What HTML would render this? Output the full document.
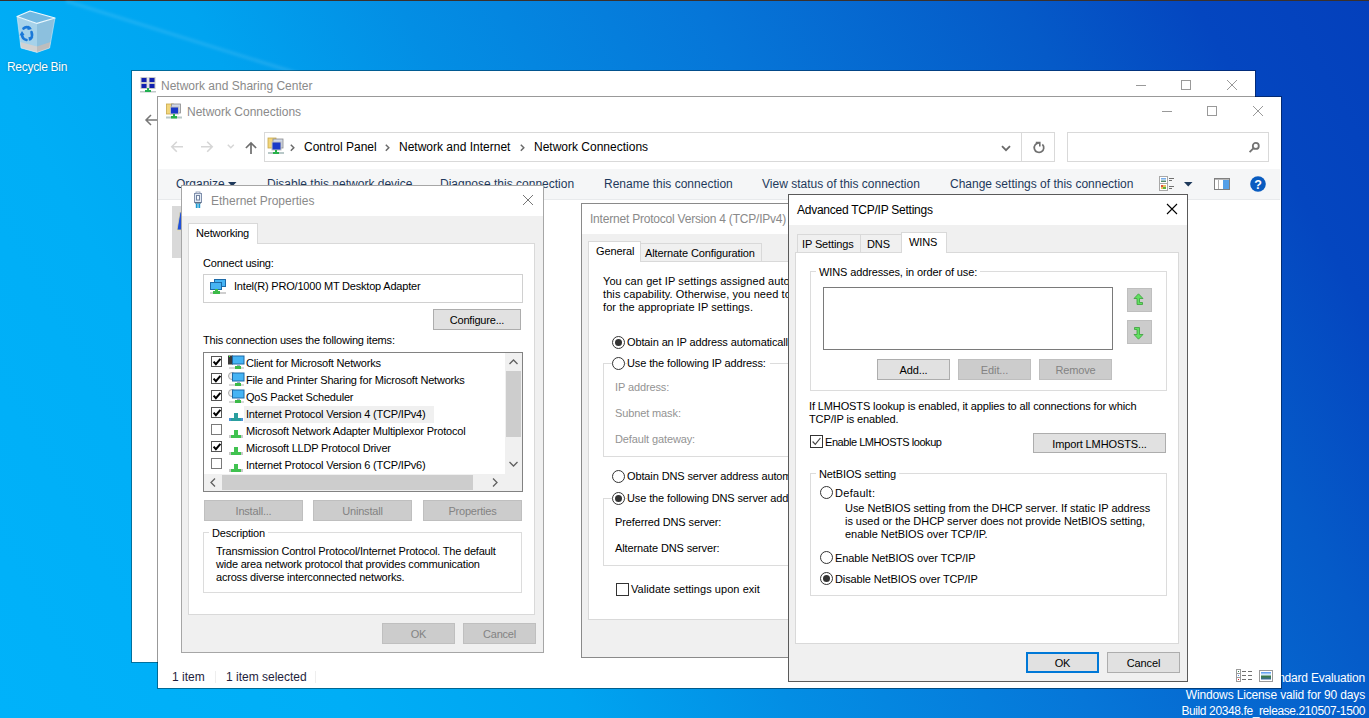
<!DOCTYPE html>
<html><head><meta charset="utf-8">
<style>
*{margin:0;padding:0;box-sizing:border-box}
html,body{width:1369px;height:718px;overflow:hidden}
body{position:relative;font-family:"Liberation Sans",sans-serif;font-size:11px;color:#000;
background:linear-gradient(61deg,#00b2fa 0%,#00aef6 20%,#00a4f0 33%,#038ee4 45%,#0676d8 62%,#055ac8 80%,#0446c0 90%,#0440bc 100%)}
.a{position:absolute}
.L{position:absolute;left:0;top:0;width:1369px;height:718px}
.t{position:absolute;white-space:nowrap;line-height:13px;font-size:11px}
.t12{position:absolute;white-space:nowrap;line-height:17px;font-size:12px}
.win{position:absolute;background:#fff}
.dlg{position:absolute;background:#f0f0f0}
.btn{position:absolute;background:#e1e1e1;border:1px solid #adadad;text-align:center;line-height:19px;font-size:11px;white-space:nowrap;padding-top:1px}
.btn.dis{background:#cccccc;border-color:#bfbfbf;color:#838383}
.grp{position:absolute;border:1px solid #dcdcdc}
.cb{position:absolute;width:13px;height:13px;border:1px solid #333;background:#fff}
.rd{position:absolute;width:13px;height:13px;border:1px solid #333;border-radius:50%;background:#fff}
.rd.on::after{content:"";position:absolute;left:2px;top:2px;width:7px;height:7px;border-radius:50%;background:#333}
.gray{color:#6d6d6d}
.es{letter-spacing:-0.2px}
.ts{letter-spacing:-0.12px}
.dis{color:#939393}
svg{position:absolute;overflow:visible}
</style></head><body>

<!-- DESKTOP -->
<div class="L" id="desk">
  <div class="a" style="left:0;top:0;width:1369px;height:1px;background:#3a302c"></div>
  <svg style="left:0;top:0" width="1369" height="718"><defs><filter id="bl" x="-20%" y="-50%" width="140%" height="200%"><feGaussianBlur stdDeviation="1.8"/></filter></defs>
    <path d="M66 1 L306 76" stroke="rgba(255,255,255,.12)" stroke-width="3" filter="url(#bl)"/>
  </svg>
  <!-- recycle bin -->
  <svg style="left:0;top:0" width="60" height="56" viewBox="0 0 60 56">
    <path d="M17 16.5 L37 23.4 L37 52.4 L21 48 Z" fill="#a6d2ea"/>
    <path d="M37 23.4 L55 18 L49.6 48 L37 52.4 Z" fill="#8cc0de"/>
    <path d="M17 16.5 L30 11 L55 18 L37 23.4 Z" fill="#72b9e2" stroke="#eef8fd" stroke-width="1.1" stroke-linejoin="round"/>
    <path d="M20.3 42 L37 46.5 L37 52.4 L21 48 Z" fill="#d2d2d2"/>
    <path d="M37 46.5 L50.6 42 L49.6 48 L37 52.4 Z" fill="#bdbdbd"/>
    <path d="M17 16.5 L21 48 L37 52.4 L49.6 48 L55 18" fill="none" stroke="#d8eef9" stroke-width="0.8" opacity=".7"/>
    <g fill="none" stroke="#1a78d8" stroke-width="2.6" stroke-linecap="round">
      <path d="M23.5 28.5 Q26 26 29.5 28"/>
      <path d="M31.5 32 Q33 36 30.5 39"/>
      <path d="M26.5 40 Q22 39 22 34"/>
    </g>
    <g fill="#1a78d8"><path d="M28 25.5 L32 29 L27.5 30 Z"/><path d="M33.5 37.5 L29 41 L28.5 37 Z"/><path d="M19.5 35.5 L22 31 L24.5 35 Z"/></g>
  </svg>
  <div class="t12" style="left:7px;top:59px;color:#fff;font-size:12px;letter-spacing:-0.3px;text-shadow:0 0 2px rgba(0,0,0,.35)">Recycle Bin</div>
  <!-- watermark -->
  <div class="t12" style="right:4px;top:670px;color:#fff;text-align:right;letter-spacing:-0.2px">Windows Server 2022 Standard Evaluation</div>
  <div class="t12" style="right:4px;top:687px;color:#fff;text-align:right;letter-spacing:-0.15px">Windows License valid for 90 days</div>
  <div class="t12" style="right:4px;top:703px;color:#fff;text-align:right;letter-spacing:-0.39px">Build 20348.fe_release.210507-1500</div>
</div>

<!-- NETWORK AND SHARING CENTER -->
<div class="L" id="nsc">
  <div class="win" style="left:131px;top:70px;width:1125px;height:593px;border:1px solid rgba(0,0,0,.36);background-clip:padding-box"></div>
  <div class="t12" style="left:161px;top:78px;color:#8a8a8a">Network and Sharing Center</div>
  <svg style="left:140px;top:77px" width="16" height="16">
    <rect x="1" y="0.5" width="6" height="5" fill="#1020b0" stroke="#c8c8c8"/><rect x="9" y="0.5" width="6" height="5" fill="#1020b0" stroke="#c8c8c8"/>
    <rect x="1" y="6.5" width="6" height="5" fill="#1020b0" stroke="#c8c8c8"/><rect x="9" y="6.5" width="6" height="5" fill="#1020b0" stroke="#c8c8c8"/>
    <rect x="7" y="11" width="2" height="3" fill="#20b050"/><rect x="0" y="14" width="16" height="1.5" fill="#c0c8c8"/><rect x="5" y="13" width="6" height="2" fill="#20b050"/>
  </svg>
  <!-- title controls -->
  <div class="a" style="left:1136px;top:85px;width:10px;height:1px;background:#999"></div>
  <div class="a" style="left:1181px;top:80px;width:10px;height:10px;border:1px solid #999"></div>
  <svg style="left:1227px;top:80px" width="10" height="10"><path d="M0 0L10 10M10 0L0 10" stroke="#999" stroke-width="1"/></svg>
  <!-- back arrow -->
  <svg style="left:145px;top:114px" width="12" height="12"><path d="M1 6H12M6 1L1 6L6 11" stroke="#777" stroke-width="1.5" fill="none"/></svg>
</div>

<!-- NETWORK CONNECTIONS -->
<div class="L" id="nc">
  <div class="win" style="left:157px;top:96px;width:1125px;height:593px;border:1px solid rgba(0,0,0,.4);background-clip:padding-box"></div>
  <div class="t12" style="left:187px;top:104px;color:#8a8a8a">Network Connections</div>
  <svg style="left:166px;top:103px" width="16" height="16">
    <rect x="0.5" y="1" width="7" height="10" fill="#f2d67c" stroke="#c9a94a" stroke-width="0.8"/>
    <rect x="5.5" y="1" width="9" height="9" fill="#d0d8e8" stroke="#8a8a8a" stroke-width="0.8"/>
    <rect x="4.5" y="4" width="8" height="7" fill="#1838c8" stroke="#c0c0c0" stroke-width="1"/>
    <rect x="7" y="11" width="2" height="2" fill="#28b04a"/><rect x="0" y="13.5" width="16" height="2" fill="#b8c8c8"/><rect x="5" y="13" width="6" height="2.5" fill="#28b04a"/>
  </svg>
  <div class="a" style="left:1162px;top:111px;width:10px;height:1px;background:#999"></div>
  <div class="a" style="left:1207px;top:106px;width:10px;height:10px;border:1px solid #999"></div>
  <svg style="left:1253px;top:106px" width="10" height="10"><path d="M0 0L10 10M10 0L0 10" stroke="#999" stroke-width="1"/></svg>
  <!-- nav -->
  <svg style="left:171px;top:140px" width="12" height="12"><path d="M0.8 6.8H12M5.8 1.8L0.8 6.8L5.8 11.8" stroke="#d6d6d6" stroke-width="1.6" fill="none"/></svg>
  <svg style="left:201px;top:140px" width="12" height="12"><path d="M0 6.8H11.2M6.2 1.8L11.2 6.8L6.2 11.8" stroke="#d6d6d6" stroke-width="1.6" fill="none"/></svg>
  <svg style="left:227px;top:144px" width="8" height="6"><path d="M0.8 0.8L3.8 3.8L6.8 0.8" stroke="#d6d6d6" stroke-width="1.5" fill="none"/></svg>
  <svg style="left:245px;top:141px" width="12" height="14"><path d="M6 13V2M0.9 7L6 1.9L11.1 7" stroke="#6e6e6e" stroke-width="1.7" fill="none"/></svg>
  <!-- address bar -->
  <div class="a" style="left:264px;top:132px;width:791px;height:30px;border:1px solid #d9d9d9;background:#fff"></div>
  <div class="a" style="left:1021px;top:133px;width:1px;height:28px;background:#d9d9d9"></div>
  <div class="t12" style="left:304px;top:139px;color:#000">Control Panel</div>
  <div class="t12" style="left:399px;top:139px;color:#000">Network and Internet</div>
  <div class="t12" style="left:534px;top:139px;color:#000">Network Connections</div>
  <svg style="left:290px;top:144px" width="5" height="8"><path d="M0.8 0.8L3.8 3.8L0.8 6.8" stroke="#6a6a6a" stroke-width="1.5" fill="none"/></svg>
  <svg style="left:385px;top:144px" width="5" height="8"><path d="M0.8 0.8L3.8 3.8L0.8 6.8" stroke="#6a6a6a" stroke-width="1.5" fill="none"/></svg>
  <svg style="left:520px;top:144px" width="5" height="8"><path d="M0.8 0.8L3.8 3.8L0.8 6.8" stroke="#6a6a6a" stroke-width="1.5" fill="none"/></svg>
  <svg style="left:1001px;top:145px" width="10" height="7"><path d="M1 1.2L5 5.2L9 1.2" stroke="#6a6a6a" stroke-width="1.8" fill="none"/></svg>
  <svg style="left:1032px;top:140px" width="14" height="14"><path d="M10.36 4.34A4.75 4.75 0 1 1 7 2.95" stroke="#707070" stroke-width="1.7" fill="none"/><path d="M3.8 2.5H7.8V6.5" stroke="#707070" stroke-width="1.6" fill="none"/></svg>
  <!-- search -->
  <div class="a" style="left:1067px;top:132px;width:202px;height:30px;border:1px solid #d9d9d9;background:#fff"></div>
  <svg style="left:1248px;top:142px" width="12" height="12"><circle cx="7.8" cy="3.9" r="3" stroke="#737373" stroke-width="1.8" fill="none"/><path d="M5.6 6.1L1.6 10.1" stroke="#737373" stroke-width="1.9"/></svg>
  <!-- address icon -->
  <svg style="left:267px;top:137px" width="18" height="18">
    <rect x="1" y="1" width="8" height="10" fill="#f2d67c" stroke="#c9a94a" stroke-width="0.8"/>
    <rect x="6" y="2" width="10" height="9" fill="#d0d8e8" stroke="#8a8a8a" stroke-width="0.8"/>
    <rect x="5" y="5" width="9" height="8" fill="#1838c8" stroke="#c0c0c0" stroke-width="1"/>
    <rect x="8" y="13" width="2" height="2" fill="#28b04a"/><rect x="1" y="15" width="16" height="2" fill="#b8c8c8"/><rect x="6" y="15" width="6" height="2" fill="#28b04a"/>
  </svg>
  <!-- command bar -->
  <div class="a" style="left:158px;top:169px;width:1122px;height:31px;background:#f5f6f7;border-bottom:1px solid #e8eaec"></div>
  <div class="t12" style="left:176px;top:176px;color:#1e395b">Organize</div>
  <svg style="left:228px;top:182px" width="9" height="5"><path d="M0 0H8.5L4.25 4.5Z" fill="#1e395b"/></svg>
  <div class="t12" style="left:267px;top:176px;color:#1e395b">Disable this network device</div>
  <div class="t12" style="left:440px;top:176px;color:#1e395b">Diagnose this connection</div>
  <div class="t12" style="left:604px;top:176px;color:#1e395b">Rename this connection</div>
  <div class="t12" style="left:762px;top:176px;color:#1e395b">View status of this connection</div>
  <div class="t12" style="left:950px;top:176px;color:#1e395b">Change settings of this connection</div>
  <!-- view icons -->
  <svg style="left:1159px;top:176px" width="16" height="15">
    <rect x="0.5" y="0.5" width="8" height="14" fill="#fff" stroke="#a8a8a8"/>
    <path d="M0.5 7.5H8.5" stroke="#a8a8a8"/>
    <defs><linearGradient id="ls" x1="0" y1="0" x2="0" y2="1"><stop offset="0" stop-color="#5a9ae8"/><stop offset=".5" stop-color="#d0e4f0"/><stop offset="1" stop-color="#2a6a3a"/></linearGradient></defs>
    <rect x="2" y="2" width="5" height="4" fill="url(#ls)"/>
    <rect x="2" y="9" width="5" height="4" fill="#e8c060"/><rect x="2" y="9" width="2" height="2" fill="#e05040"/><rect x="4" y="11" width="3" height="2" fill="#60b040"/>
    <path d="M10 2.5H15M10 4.5H13M10 10.5H15M10 12.5H13" stroke="#707070"/>
  </svg>
  <svg style="left:1184px;top:182px" width="9" height="5"><path d="M0 0H8.5L4.25 4.5Z" fill="#1e395b"/></svg>
  <svg style="left:1214px;top:178px" width="16" height="12"><rect x="0.5" y="0.5" width="15" height="11" fill="#fff" stroke="#808080"/><rect x="9" y="2" width="6" height="9" fill="#55a0e8"/><path d="M4.5 1V11" stroke="#b0b0b0"/><path d="M1 1.5H15" stroke="#b8b8b8"/></svg>
  <svg style="left:1250px;top:176px" width="16" height="16"><circle cx="8" cy="8" r="7.8" fill="#0a5cc0"/><text x="8" y="12.5" font-family="Liberation Sans" font-weight="bold" font-size="12.5" fill="#fff" text-anchor="middle">?</text></svg>
  <!-- left selected item -->
  <div class="a" style="left:172px;top:206px;width:20px;height:52px;background:#d9d9d9"></div>
  <svg style="left:176px;top:211px" width="8" height="20"><path d="M1 19L4 1H7V19Z" fill="#1f4fd8" stroke="#e6dca8" stroke-width="0.8"/></svg>
  <!-- status bar -->
  <div class="t12" style="left:172px;top:669px;color:#1e1e3c">1 item</div>
  <div class="a" style="left:215px;top:671px;width:1px;height:12px;background:#eee"></div>
  <div class="t12" style="left:226px;top:669px;color:#1e1e3c">1 item selected</div>
  <div class="a" style="left:315px;top:671px;width:1px;height:12px;background:#eee"></div>
  <!-- statusbar view icons -->
  <svg style="left:1236px;top:669px" width="17" height="13"><g fill="#fff" stroke="#9a9a9a"><rect x="0.5" y="0.5" width="4" height="4"/><rect x="0.5" y="4.5" width="4" height="4"/><rect x="0.5" y="8.5" width="4" height="4"/></g>
    <rect x="2" y="2" width="1" height="1" fill="#3a8a5a"/><rect x="2" y="6" width="1" height="1" fill="#4a90f0"/><rect x="2" y="10" width="1" height="1" fill="#e02020"/>
    <path d="M6 2.5H10M12 2.5H16M6 6.5H10M12 6.5H16M6 10.5H10M12 10.5H16" stroke="#707070"/></svg>
  <svg style="left:1259px;top:670px" width="14" height="13"><rect x="0.5" y="0.5" width="13" height="11" fill="#fff" stroke="#9a9a9a"/>
    <defs><linearGradient id="sky" x1="0" y1="0" x2="0" y2="1"><stop offset="0" stop-color="#4a90f0"/><stop offset=".35" stop-color="#d8ecf8"/><stop offset=".6" stop-color="#3a7a4a"/><stop offset="1" stop-color="#3a6aa0"/></linearGradient></defs>
    <rect x="2" y="2" width="10" height="7.5" fill="url(#sky)"/></svg>
</div>

<!-- ETHERNET PROPERTIES -->
<div class="L" id="eth">
  <div class="dlg" style="left:181px;top:185px;width:363px;height:468px;border:1px solid #a6a6a6"></div>
  <div class="a" style="left:182px;top:186px;width:361px;height:30px;background:#fff"></div>
  <svg style="left:194px;top:191px" width="9" height="18"><rect x="0.5" y="2.5" width="7" height="9" fill="#e2eaf4" stroke="#8090ac"/><rect x="2" y="1" width="4" height="1.5" fill="#fff" stroke="#8090ac" stroke-width="0.8"/><rect x="2.5" y="4.5" width="3" height="4.5" fill="#f4f8fc" stroke="#7282a0"/><rect x="1" y="11.5" width="6" height="1" fill="#3a4a60"/><rect x="1.8" y="12.5" width="1.8" height="4.5" fill="#1a98d0"/><rect x="4.4" y="12.5" width="1.8" height="4.5" fill="#1a98d0"/></svg>
  <div class="t12" style="left:211px;top:193px;color:#8a8a8a">Ethernet Properties</div>
  <svg style="left:523px;top:195px" width="10" height="10"><path d="M0 0L10 10M10 0L0 10" stroke="#777" stroke-width="1"/></svg>
  <!-- tab -->
  <div class="a" style="left:188px;top:243px;width:347px;height:372px;background:#fff;border:1px solid #d9d9d9"></div>
  <div class="a" style="left:188px;top:223px;width:70px;height:21px;background:#fff;border:1px solid #d9d9d9;border-bottom:none"></div>
  <div class="t es" style="left:196px;top:227px">Networking</div>
  <div class="t es" style="left:203px;top:257px">Connect using:</div>
  <div class="a" style="left:203px;top:274px;width:320px;height:29px;border:1px solid #d0d0d0;background:#fff"></div>
  <svg style="left:210px;top:279px" width="17" height="16"><rect x="4.5" y="0.5" width="11" height="7" fill="#46b4f4" stroke="#1d6aa8"/><rect x="0.5" y="3.5" width="11" height="7" fill="#46b4f4" stroke="#1d6aa8"/><rect x="5" y="10" width="3" height="3" fill="#3cba48"/><rect x="0" y="13" width="16" height="2" fill="#cfcfcf"/><rect x="3" y="12" width="7" height="3" fill="#3cba48"/></svg>
  <div class="t es" style="left:234px;top:280px">Intel(R) PRO/1000 MT Desktop Adapter</div>
  <div class="btn es" style="left:433px;top:309px;width:88px;height:21px">Configure...</div>
  <div class="t es" style="left:203px;top:334px">This connection uses the following items:</div>
  <!-- list -->
  <div class="a" style="left:203px;top:352px;width:320px;height:140px;border:1px solid #828282;background:#fff"></div>
  <div class="a" style="left:211px;top:356px;width:11px;height:11px;border:1px solid #555;background:#fff"></div>
  <svg style="left:213px;top:358px" width="8" height="8"><path d="M0.6 3.6L2.9 6.2L7.4 0.9" stroke="#000" stroke-width="2" fill="none"/></svg>
  <svg style="left:228px;top:355px" width="17" height="15"><rect x="0" y="0.5" width="5" height="9" fill="#3a3a3a"/><rect x="1" y="1" width="1" height="1" fill="#3f3"/><rect x="4.5" y="1" width="11.5" height="8" fill="#46b4f4" stroke="#1d6aa8" stroke-width="1"/><rect x="9" y="9.5" width="3" height="2" fill="#9ac"/><rect x="1" y="12" width="15" height="2" fill="#d8d8d8"/><rect x="7" y="11" width="6" height="3" fill="#3cba48"/></svg>
  <div class="t es" style="left:246px;top:357px">Client for Microsoft Networks</div>
  <div class="a" style="left:211px;top:373px;width:11px;height:11px;border:1px solid #555;background:#fff"></div>
  <svg style="left:213px;top:375px" width="8" height="8"><path d="M0.6 3.6L2.9 6.2L7.4 0.9" stroke="#000" stroke-width="2" fill="none"/></svg>
  <svg style="left:228px;top:372px" width="17" height="15"><circle cx="4" cy="4" r="3.5" fill="#eee" stroke="#aaa"/><rect x="4.5" y="1" width="11.5" height="8" fill="#46b4f4" stroke="#1d6aa8" stroke-width="1"/><rect x="9" y="9.5" width="3" height="2" fill="#9ac"/><rect x="1" y="12" width="15" height="2" fill="#d8d8d8"/><rect x="7" y="11" width="6" height="3" fill="#3cba48"/></svg>
  <div class="t es" style="left:246px;top:374px">File and Printer Sharing for Microsoft Networks</div>
  <div class="a" style="left:211px;top:390px;width:11px;height:11px;border:1px solid #555;background:#fff"></div>
  <svg style="left:213px;top:392px" width="8" height="8"><path d="M0.6 3.6L2.9 6.2L7.4 0.9" stroke="#000" stroke-width="2" fill="none"/></svg>
  <svg style="left:228px;top:389px" width="17" height="15"><circle cx="4" cy="4" r="3.5" fill="#eee" stroke="#aaa"/><rect x="4.5" y="1" width="11.5" height="8" fill="#46b4f4" stroke="#1d6aa8" stroke-width="1"/><rect x="9" y="9.5" width="3" height="2" fill="#9ac"/><rect x="1" y="12" width="15" height="2" fill="#d8d8d8"/><rect x="7" y="11" width="6" height="3" fill="#3cba48"/></svg>
  <div class="t es" style="left:246px;top:391px">QoS Packet Scheduler</div>
  <div class="a" style="left:244px;top:406px;width:190px;height:17px;background:#f0f0f0"></div>
  <div class="a" style="left:211px;top:407px;width:11px;height:11px;border:1px solid #555;background:#fff"></div>
  <svg style="left:213px;top:409px" width="8" height="8"><path d="M0.6 3.6L2.9 6.2L7.4 0.9" stroke="#000" stroke-width="2" fill="none"/></svg>
  <svg style="left:229px;top:413px" width="14" height="8"><rect x="5" y="0" width="4" height="5" fill="#2a9e9e"/><rect x="0" y="5" width="14" height="3" fill="#2a9e9e"/><rect x="0" y="5" width="2" height="3" fill="#4a90d8"/><rect x="12" y="5" width="2" height="3" fill="#4a90d8"/></svg>
  <div class="t es" style="left:246px;top:408px">Internet Protocol Version 4 (TCP/IPv4)</div>
  <div class="a" style="left:211px;top:424px;width:11px;height:11px;border:1px solid #7a7a7a;background:#fff"></div>
  <svg style="left:229px;top:430px" width="14" height="8"><rect x="5" y="0" width="4" height="5" fill="#40c250"/><rect x="0" y="5" width="14" height="3" fill="#40c250"/><rect x="0" y="5" width="2" height="3" fill="#c8c8c8"/><rect x="12" y="5" width="2" height="3" fill="#c8c8c8"/></svg>
  <div class="t es" style="left:246px;top:425px">Microsoft Network Adapter Multiplexor Protocol</div>
  <div class="a" style="left:211px;top:441px;width:11px;height:11px;border:1px solid #555;background:#fff"></div>
  <svg style="left:213px;top:443px" width="8" height="8"><path d="M0.6 3.6L2.9 6.2L7.4 0.9" stroke="#000" stroke-width="2" fill="none"/></svg>
  <svg style="left:229px;top:447px" width="14" height="8"><rect x="5" y="0" width="4" height="5" fill="#40c250"/><rect x="0" y="5" width="14" height="3" fill="#40c250"/><rect x="0" y="5" width="2" height="3" fill="#c8c8c8"/><rect x="12" y="5" width="2" height="3" fill="#c8c8c8"/></svg>
  <div class="t es" style="left:246px;top:442px">Microsoft LLDP Protocol Driver</div>
  <div class="a" style="left:211px;top:458px;width:11px;height:11px;border:1px solid #7a7a7a;background:#fff"></div>
  <svg style="left:229px;top:464px" width="14" height="8"><rect x="5" y="0" width="4" height="5" fill="#40c250"/><rect x="0" y="5" width="14" height="3" fill="#40c250"/><rect x="0" y="5" width="2" height="3" fill="#c8c8c8"/><rect x="12" y="5" width="2" height="3" fill="#c8c8c8"/></svg>
  <div class="t es" style="left:246px;top:459px">Internet Protocol Version 6 (TCP/IPv6)</div>
  <!-- v scrollbar -->
  <div class="a" style="left:505px;top:353px;width:17px;height:121px;background:#f0f0f0"></div>
  <div class="a" style="left:506px;top:371px;width:15px;height:66px;background:#cdcdcd"></div>
  <svg style="left:509px;top:359px" width="9" height="6"><path d="M0.5 5L4.5 1L8.5 5" stroke="#606060" stroke-width="1.3" fill="none"/></svg>
  <svg style="left:509px;top:461px" width="9" height="6"><path d="M0.5 1L4.5 5L8.5 1" stroke="#606060" stroke-width="1.3" fill="none"/></svg>
  <!-- h scrollbar -->
  <div class="a" style="left:204px;top:474px;width:318px;height:17px;background:#f0f0f0"></div>
  <div class="a" style="left:222px;top:475px;width:251px;height:15px;background:#cdcdcd"></div>
  <svg style="left:210px;top:478px" width="6" height="9"><path d="M5 0.5L1 4.5L5 8.5" stroke="#606060" stroke-width="1.3" fill="none"/></svg>
  <svg style="left:492px;top:478px" width="6" height="9"><path d="M1 0.5L5 4.5L1 8.5" stroke="#606060" stroke-width="1.3" fill="none"/></svg>
  <!-- buttons -->
  <div class="btn dis es" style="left:204px;top:500px;width:99px;height:21px">Install...</div>
  <div class="btn dis es" style="left:313px;top:500px;width:99px;height:21px">Uninstall</div>
  <div class="btn dis es" style="left:423px;top:500px;width:99px;height:21px">Properties</div>
  <!-- description -->
  <div class="grp" style="left:203px;top:532px;width:319px;height:61px"></div>
  <div class="t es" style="left:209px;top:527px;background:#fff;padding:0 3px">Description</div>
  <div class="t es" style="left:216px;top:545px">Transmission Control Protocol/Internet Protocol. The default</div>
  <div class="t es" style="left:216px;top:558px">wide area network protocol that provides communication</div>
  <div class="t es" style="left:216px;top:571px">across diverse interconnected networks.</div>
  <div class="btn dis es" style="left:382px;top:623px;width:73px;height:21px">OK</div>
  <div class="btn dis es" style="left:463px;top:623px;width:73px;height:21px">Cancel</div>
</div>

<!-- IPV4 -->
<div class="L" id="ipv4">
  <div class="dlg" style="left:581px;top:203px;width:420px;height:455px;border:1px solid #8a8a8a"></div>
  <div class="a" style="left:582px;top:204px;width:418px;height:30px;background:#fff"></div>
  <div class="t12" style="left:590px;top:211px;color:#8a8a8a;letter-spacing:-0.21px">Internet Protocol Version 4 (TCP/IPv4)</div>
  <div class="a" style="left:588px;top:261px;width:405px;height:359px;background:#fff;border:1px solid #d9d9d9"></div>
  <div class="a" style="left:640px;top:243px;width:122px;height:19px;background:#f0f0f0;border:1px solid #d9d9d9"></div>
  <div class="a" style="left:588px;top:241px;width:53px;height:21px;background:#fff;border:1px solid #d9d9d9;border-bottom:none"></div>
  <div class="t ts" style="left:596px;top:245px;">General</div>
  <div class="t ts" style="left:645px;top:247px;">Alternate Configuration</div>
  <div class="t ts" style="letter-spacing:0.09px;left:603px;top:275px;">You can get IP settings assigned automatically if your network supports</div>
  <div class="t ts" style="letter-spacing:0.09px;left:603px;top:288px;">this capability. Otherwise, you need to ask your network administrator</div>
  <div class="t ts" style="letter-spacing:0.09px;left:603px;top:301px;">for the appropriate IP settings.</div>
  <div class="rd on" style="left:612px;top:336px"></div>
  <div class="t ts" style="left:627px;top:336px;">Obtain an IP address automatically</div>
  <div class="grp" style="left:603px;top:363px;width:400px;height:94px"></div>
  <div class="rd" style="left:612px;top:357px"></div>
  <div class="t ts" style="left:627px;top:357px;background:#fff;padding-right:4px">Use the following IP address:</div>
  <div class="t ts dis" style="left:615px;top:381px;">IP address:</div>
  <div class="t ts dis" style="left:615px;top:407px;">Subnet mask:</div>
  <div class="t ts dis" style="left:615px;top:433px;">Default gateway:</div>
  <div class="rd" style="left:612px;top:470px"></div>
  <div class="t ts" style="left:627px;top:470px;">Obtain DNS server address automatically</div>
  <div class="grp" style="left:603px;top:498px;width:400px;height:68px"></div>
  <div class="rd on" style="left:612px;top:492px"></div>
  <div class="t ts" style="left:627px;top:492px;background:#fff;padding-right:4px">Use the following DNS server addresses:</div>
  <div class="t ts" style="left:615px;top:516px;">Preferred DNS server:</div>
  <div class="t ts" style="left:615px;top:542px;">Alternate DNS server:</div>
  <div class="cb" style="left:616px;top:583px"></div>
  <div class="t ts" style="letter-spacing:0.05px;left:631px;top:583px;">Validate settings upon exit</div>
</div>

<!-- ADVANCED -->
<div class="L" id="adv">
  <div class="dlg" style="left:788px;top:194px;width:400px;height:488px;border:1px solid #5a5a5a"></div>
  <div class="a" style="left:789px;top:195px;width:398px;height:30px;background:#fff"></div>
  <div class="t12" style="left:797px;top:202px;color:#000;letter-spacing:-0.25px">Advanced TCP/IP Settings</div>
  <svg style="left:1167px;top:204px" width="10" height="10"><path d="M0 0L10 10M10 0L0 10" stroke="#000" stroke-width="1.1"/></svg>
  <div class="a" style="left:795px;top:252px;width:384px;height:392px;background:#fff;border:1px solid #d9d9d9"></div>
  <div class="a" style="left:797px;top:234px;width:64px;height:19px;background:#f0f0f0;border:1px solid #d9d9d9"></div>
  <div class="a" style="left:860px;top:234px;width:42px;height:19px;background:#f0f0f0;border:1px solid #d9d9d9"></div>
  <div class="a" style="left:901px;top:232px;width:46px;height:21px;background:#fff;border:1px solid #d9d9d9;border-bottom:none"></div>
  <div class="t ts" style="left:802px;top:238px;">IP Settings</div>
  <div class="t ts" style="left:867px;top:238px;">DNS</div>
  <div class="t ts" style="left:909px;top:236px;">WINS</div>
  <div class="grp" style="left:810px;top:271px;width:357px;height:120px"></div>
  <div class="t ts" style="left:816px;top:266px;background:#fff;padding:0 3px">WINS addresses, in order of use:</div>
  <div class="a" style="left:823px;top:287px;width:290px;height:63px;border:1px solid #7a7a7a;background:#fff"></div>
  <div class="btn dis" style="left:1127px;top:288px;width:25px;height:24px"></div>
  <svg style="left:1133px;top:293px" width="11" height="14"><path d="M5.5 0.8L1 5.5H4V11.5H9.5V9.5H6.5V5.5H10Z" fill="#62e062" stroke="#3aa03a" stroke-width="0.8"/></svg>
  <div class="btn dis" style="left:1127px;top:320px;width:25px;height:24px"></div>
  <svg style="left:1133px;top:326px" width="11" height="14"><path d="M5.5 13.2L1 8.5H4V3.5H1.5V1.5H6.5V8.5H10Z" fill="#62e062" stroke="#3aa03a" stroke-width="0.8"/></svg>
  <div class="btn ts" style="left:877px;top:359px;width:73px;height:21px">Add...</div>
  <div class="btn dis ts" style="left:958px;top:359px;width:73px;height:21px">Edit...</div>
  <div class="btn dis ts" style="left:1039px;top:359px;width:73px;height:21px">Remove</div>
  <div class="t ts" style="left:809px;top:400px;">If LMHOSTS lookup is enabled, it applies to all connections for which</div>
  <div class="t ts" style="left:809px;top:413px;">TCP/IP is enabled.</div>
  <div class="cb" style="left:810px;top:435px"></div>
  <svg style="left:812px;top:437px" width="9" height="9"><path d="M0.6 4.5L3.3 7.4L8.4 1" stroke="#444" stroke-width="1.2" fill="none"/></svg>
  <div class="t ts" style="letter-spacing:-0.45px;left:825px;top:436px;">Enable LMHOSTS lookup</div>
  <div class="btn ts" style="left:1033px;top:433px;width:133px;height:20px;line-height:18px">Import LMHOSTS...</div>
  <div class="grp" style="left:810px;top:473px;width:357px;height:123px"></div>
  <div class="t ts" style="left:816px;top:468px;background:#fff;padding:0 3px">NetBIOS setting</div>
  <div class="rd" style="left:820px;top:486px"></div>
  <div class="t ts" style="letter-spacing:0.3px;left:835px;top:487px;">Default:</div>
  <div class="t ts" style="letter-spacing:-0.05px;left:845px;top:502px;">Use NetBIOS setting from the DHCP server. If static IP address</div>
  <div class="t ts" style="letter-spacing:-0.05px;left:845px;top:515px;">is used or the DHCP server does not provide NetBIOS setting,</div>
  <div class="t ts" style="letter-spacing:-0.05px;left:845px;top:528px;">enable NetBIOS over TCP/IP.</div>
  <div class="rd" style="left:820px;top:551px"></div>
  <div class="t ts" style="left:835px;top:552px;">Enable NetBIOS over TCP/IP</div>
  <div class="rd on" style="left:820px;top:572px"></div>
  <div class="t ts" style="left:835px;top:573px;">Disable NetBIOS over TCP/IP</div>
  <div class="btn ts" style="left:1026px;top:652px;width:73px;height:21px;border:2px solid #0078d7;line-height:17px">OK</div>
  <div class="btn ts" style="left:1107px;top:652px;width:73px;height:21px">Cancel</div>
</div>

</body></html>
